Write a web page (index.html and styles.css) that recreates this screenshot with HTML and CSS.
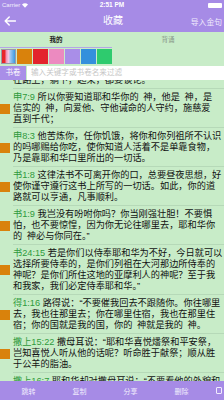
FILE: index.html
```html
<!DOCTYPE html>
<html lang="zh-CN">
<head>
<meta charset="utf-8">
<title>收藏</title>
<link rel="stylesheet" href="styles.css">
</head>
<body>
<div class="screen">
  <header class="topbar">
    <div class="status">
      <span class="carrier">Carrier
        <svg class="wifi" width="6" height="5" viewBox="0 0 12 9"><path d="M6 9L0 2.5C3.5-0.8 8.5-0.8 12 2.5Z" fill="#fff"/></svg>
      </span>
      <span class="time">2:51 PM</span>
      <span class="battery"></span>
    </div>
    <div class="nav">
      <svg class="back" width="12" height="10" viewBox="0 0 12 10"><path d="M11.5 5H1.2M5.2 1L1.2 5l4 4" fill="none" stroke="#fff" stroke-width="1.5" stroke-linecap="round" stroke-linejoin="round"/></svg>
      <h1 class="title">收藏</h1>
      <span class="import">导入金句</span>
    </div>
  </header>

  <div class="tabs">
    <div class="tab active">我的</div>
    <div class="tab">背诵</div>
  </div>

  <div class="swatches">
    <span class="swatch all"></span>
    <span class="swatch orange"></span>
    <span class="swatch red"></span>
    <span class="swatch pink"></span>
    <span class="swatch purple"></span>
    <span class="swatch blue"></span>
    <span class="swatch green"></span>
  </div>

  <div class="search">
    <span class="book-btn">书卷</span>
    <span class="input">输入关键字或书卷名来过滤</span>
  </div>

  <div class="list">
    <div class="item partial">
      <span class="marker none"></span>
      <p class="body">在路上，躺下，起来，都要谈论。</p>
    </div>
    <div class="item">
      <span class="marker"></span>
      <p class="body"><span class="ref">申7:9</span> 所以你要知道耶和华你的&#8194;神，他是&#8194;神，是<br>信实的&#8194;神，向爱他、守他诫命的人守约，施慈爱<br>直到千代；</p>
    </div>
    <div class="item">
      <span class="marker"></span>
      <p class="body"><span class="ref">申8:3</span> 他苦炼你，任你饥饿，将你和你列祖所不认识<br>的吗哪赐给你吃，使你知道人活着不是单靠食物，<br>乃是靠耶和华口里所出的一切话。</p>
    </div>
    <div class="item">
      <span class="marker"></span>
      <p class="body"><span class="ref">书1:8</span> 这律法书不可离开你的口，总要昼夜思想，好<br>使你谨守遵行这书上所写的一切话。如此，你的道<br>路就可以亨通，凡事顺利。</p>
    </div>
    <div class="item">
      <span class="marker"></span>
      <p class="body"><span class="ref">书1:9</span> 我岂没有吩咐你吗？你当刚强壮胆！不要惧<br>怕，也不要惊惶，因为你无论往哪里去，耶和华你<br>的&#8194;神必与你同在。”</p>
    </div>
    <div class="item">
      <span class="marker"></span>
      <p class="body"><span class="ref">书24:15</span> 若是你们以侍奉耶和华为不好，今日就可以<br>选择所要侍奉的，是你们列祖在大河那边所侍奉的<br>神呢？是你们所住这地的亚摩利人的神呢？至于我<br>和我家，我们必定侍奉耶和华。”</p>
    </div>
    <div class="item">
      <span class="marker"></span>
      <p class="body"><span class="ref">得1:16</span> 路得说：“不要催我回去不跟随你。你往哪里<br>去，我也往那里去；你在哪里住宿，我也在那里住<br>宿；你的国就是我的国，你的&#8194;神就是我的&#8194;神。</p>
    </div>
    <div class="item">
      <span class="marker"></span>
      <p class="body"><span class="ref">撒上15:22</span> 撒母耳说：“耶和华喜悦燔祭和平安祭，<br>岂知喜悦人听从他的话呢？听命胜于献祭；顺从胜<br>于公羊的脂油。</p>
    </div>
    <div class="item">
      <span class="marker none"></span>
      <p class="body"><span class="ref">撒上16:7</span> 耶和华却对撒母耳说：“不要看他的外貌和</p>
    </div>
  </div>

  <nav class="toolbar">
    <span class="tool">跳转</span>
    <span class="tool">复制</span>
    <span class="tool">分享</span>
    <span class="tool">删除</span>
    <span class="tool icon"><span class="check"></span></span>
  </nav>
</div>
</body>
</html>
```

FILE: styles.css
```css
* {
  box-sizing: border-box;
}

html, body {
  margin: 0;
  padding: 0;
}

body {
  width: 224px;
  height: 400px;
  overflow: hidden;
  font-family: "Liberation Sans", "Noto Sans CJK SC", sans-serif;
  background: #c8ecc8;
}

.screen {
  width: 224px;
  height: 400px;
  display: flex;
  flex-direction: column;
  overflow: hidden;
}

/* top bar */
.topbar {
  background: #a68be6;
  color: #fff;
  flex: none;
}

.status {
  height: 10px;
  display: grid;
  grid-template-columns: 1fr auto 1fr;
  align-items: center;
  padding: 0 2px;
  font-size: 6px;
  line-height: 10px;
}

.carrier {
  display: flex;
  align-items: center;
  gap: 2px;
  color: #f2eefc;
}

.time {
  font-weight: bold;
  font-size: 6.5px;
}

.battery {
  justify-self: end;
  width: 14px;
  height: 5px;
  background: #fff;
  border-radius: 1px;
}

.nav {
  height: 22px;
  display: grid;
  grid-template-columns: 1fr auto 1fr;
  align-items: center;
  padding: 0 2px 0 4px;
}

.back {
  display: block;
}

.title {
  margin: 0;
  font-size: 10px;
  font-weight: normal;
  line-height: 22px;
}

.import {
  justify-self: end;
  font-size: 7.8px;
  color: #f1ecfd;
}

/* tabs */
.tabs {
  flex: none;
  display: flex;
  height: 16px;
  background: #c8ecc8;
}

.tab {
  flex: 1;
  text-align: center;
  font-size: 6.5px;
  line-height: 15px;
  color: #8a9a8a;
}

.tab.active {
  color: #222;
  font-weight: bold;
  border-bottom: 1px solid #b4a6e6;
}

/* colour swatches */
.swatches {
  flex: none;
  display: flex;
  gap: 1px;
  height: 17px;
  padding: 1px 0 0 1px;
}

.swatch {
  width: 15px;
  height: 15px;
}

.swatch.all {
  border: 1px solid #9a9aa6;
  background: linear-gradient(to right, #e8262a 0 20%, #f29bbd 35%, #f4c6e0 50%, #9cc6f0 65%, #3a9ae0 100%);
}

.swatch.orange { background: #d9820c; }
.swatch.red { background: #e3232c; }
.swatch.pink { background: #ec8ac0; }
.swatch.purple { background: #a98ee8; }
.swatch.blue { background: #3490dc; }
.swatch.green { background: #2ecb6e; }

/* search */
.search {
  flex: none;
  display: flex;
  height: 15px;
  padding-top: 1px;
  background: #c8ecc8;
  position: relative;
  z-index: 1;
}

.book-btn {
  width: 26px;
  background: #a98ee8;
  color: #fff;
  font-size: 7.5px;
  line-height: 14px;
  text-align: center;
}

.input {
  flex: 1;
  margin-left: 1px;
  background: #fff;
  color: #c6c6c6;
  font-size: 7.6px;
  line-height: 14px;
  padding-left: 4px;
}

/* list */
.list {
  flex: 1;
  min-height: 0;
  overflow: hidden;
}

.item {
  display: flex;
  align-items: center;
}

.item.partial {
  margin-top: -8px;
}

.marker {
  flex: none;
  width: 10px;
  height: 10px;
  margin-right: 3px;
  background: #d9820c;
}

.marker.none {
  background: transparent;
}

.body {
  flex: 1;
  margin: 0;
  padding: 3px 0 2px;
  border-bottom: 1px solid #b6d9b8;
  font-size: 9.2px;
  line-height: 11px;
  color: #111;
  white-space: nowrap;
}

.ref {
  color: #2f9a3c;
}

/* bottom toolbar */
.toolbar {
  flex: none;
  height: 19px;
  background: #a68be6;
  display: grid;
  grid-template-columns: repeat(4, 51px) 1fr;
  padding-left: 3px;
  align-items: center;
}

.tool {
  text-align: center;
  font-size: 7px;
  color: #f1ecfd;
}

.tool.icon {
  text-align: left;
  padding-left: 9px;
  display: flex;
}

.check {
  width: 6px;
  height: 7px;
  border: 1px solid #f1ecfd;
  border-radius: 1px;
}
```
